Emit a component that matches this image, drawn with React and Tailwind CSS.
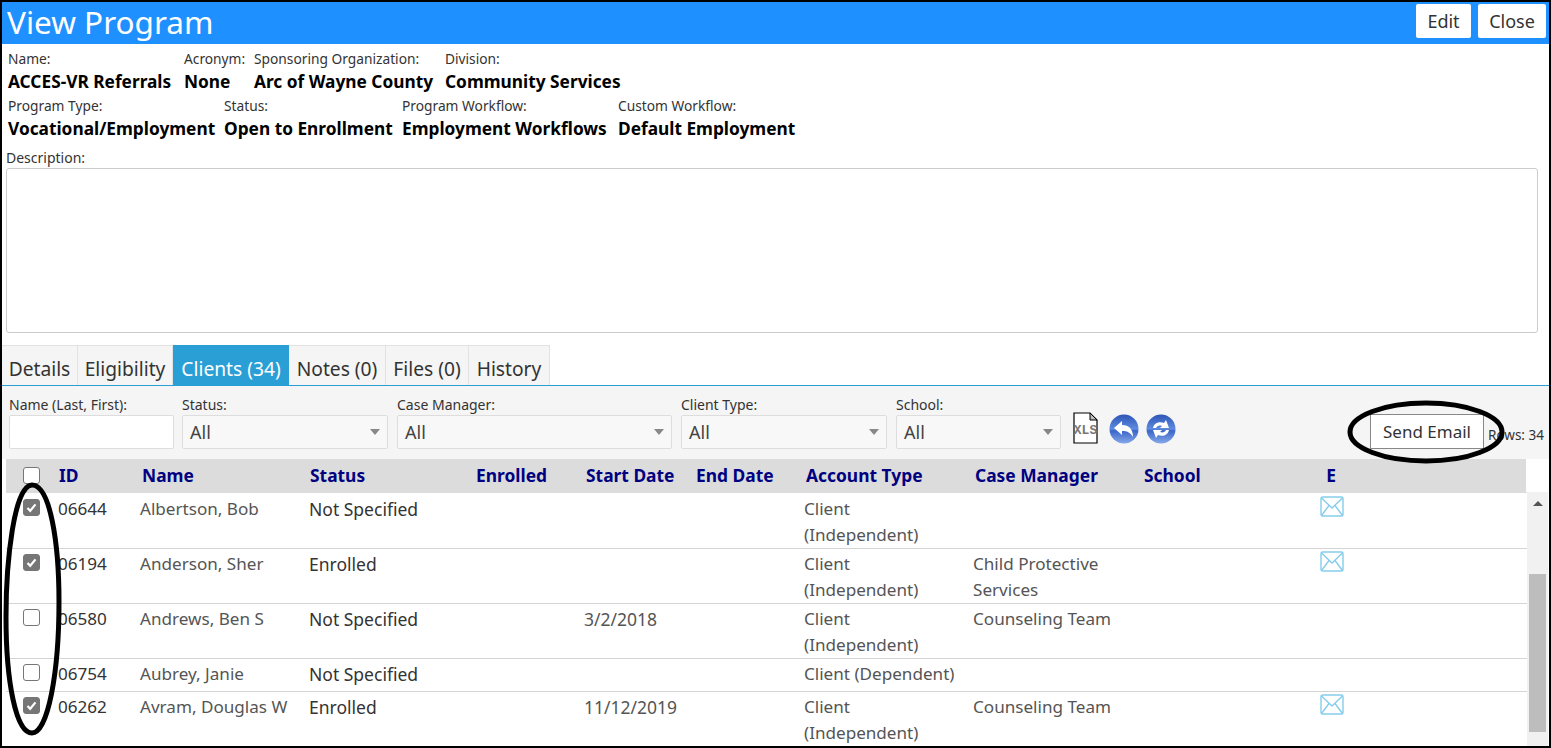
const infoRows = [
  [
    { label: 'Name:', value: 'ACCES-VR Referrals', width: 'w-[176px]' },
    { label: 'Acronym:', value: 'None', width: 'w-[70px]' },
    { label: 'Sponsoring Organization:', value: 'Arc of Wayne County', width: 'w-[191px]' },
    { label: 'Division:', value: 'Community Services', width: 'w-[200px]' },
  ],
  [
    { label: 'Program Type:', value: 'Vocational/Employment', width: 'w-[216px]' },
    { label: 'Status:', value: 'Open to Enrollment', width: 'w-[178px]' },
    { label: 'Program Workflow:', value: 'Employment Workflows', width: 'w-[216px]' },
    { label: 'Custom Workflow:', value: 'Default Employment', width: 'w-[200px]' },
  ],
]

const tabs = [
  { label: 'Details', width: 'w-[76px]' },
  { label: 'Eligibility', width: 'w-[95px]' },
  { label: 'Clients (34)', width: 'w-[116px]', active: true },
  { label: 'Notes (0)', width: 'w-[97px]' },
  { label: 'Files (0)', width: 'w-[83px]' },
  { label: 'History', width: 'w-[81px]' },
]

const filters = [
  { label: 'Status:', width: 'w-[206px]' },
  { label: 'Case Manager:', width: 'w-[275px]' },
  { label: 'Client Type:', width: 'w-[206px]' },
  { label: 'School:', width: 'w-[165px]' },
]

const clients = [
  { id: '06644', name: 'Albertson, Bob', status: 'Not Specified', start: '', type: ['Client', '(Independent)'], manager: [], email: true, checked: true, height: 'h-[56px]' },
  { id: '06194', name: 'Anderson, Sher', status: 'Enrolled', start: '', type: ['Client', '(Independent)'], manager: ['Child Protective', 'Services'], email: true, checked: true, height: 'h-[55px]' },
  { id: '06580', name: 'Andrews, Ben S', status: 'Not Specified', start: '3/2/2018', type: ['Client', '(Independent)'], manager: ['Counseling Team'], email: false, checked: false, height: 'h-[55px]' },
  { id: '06754', name: 'Aubrey, Janie', status: 'Not Specified', start: '', type: ['Client (Dependent)'], manager: [], email: false, checked: false, height: 'h-[33px]' },
  { id: '06262', name: 'Avram, Douglas W', status: 'Enrolled', start: '11/12/2019', type: ['Client', '(Independent)'], manager: ['Counseling Team'], email: true, checked: true, height: 'h-[55px]' },
]

const Checkbox = ({ checked }) => (
  <span className={`flex h-[17px] w-[17px] items-center justify-center rounded-[3px] border border-[#767676] ${checked ? 'bg-[#767676]' : 'bg-white'}`}>
    {checked && (
      <svg width="13" height="13" viewBox="0 0 13 13" fill="none">
        <path d="M2.5 7 L5.2 9.8 L10.5 3.4" stroke="white" strokeWidth="2.2" />
      </svg>
    )}
  </span>
)

const MailIcon = () => (
  <svg width="24" height="21" viewBox="0 0 24 21" fill="none" stroke="#86cdec" strokeWidth="1.4">
    <rect x="1" y="1" width="22" height="19" rx="1.5" />
    <path d="M1.5 2 L12 12 L22.5 2 M1.5 19.5 L9 9.5 M22.5 19.5 L15 9.5" />
  </svg>
)

const GlobeButton = ({ id, children }) => (
  <svg width="30" height="30" viewBox="0 0 30 30">
    <defs>
      <linearGradient id={id} x1="0" y1="0" x2="0" y2="1">
        <stop offset="0" stopColor="#2c55b5" />
        <stop offset="0.5" stopColor="#5f8be0" />
        <stop offset="0.56" stopColor="#3a66c8" />
        <stop offset="1" stopColor="#86a8ea" />
      </linearGradient>
    </defs>
    <circle cx="15" cy="15" r="14.5" fill={`url(#${id})`} />
    {children}
  </svg>
)

const SelectBox = ({ width, label }) => (
  <div className={`${width} shrink-0`}>
    <div className="h-[29px] text-[14px] leading-[38px] text-[#333]">{label}</div>
    <div className="flex h-[34px] items-center justify-between rounded-[2px] border border-[#ddd] bg-[#f8f8f8] px-[7px] text-[18px] text-[#444]">
      <span>All</span>
      <span className="h-0 w-0 border-x-[5px] border-t-[6px] border-x-transparent border-t-[#888]" />
    </div>
  </div>
)

export default function App() {
  return (
    <div className="relative flex h-[748px] w-[1551px] flex-col overflow-hidden border-2 border-black bg-white font-['Noto_Sans',sans-serif] text-[#333]">
      {/* title bar */}
      <div className="flex h-[42px] shrink-0 items-start justify-between bg-[#1e90ff] pl-[5px] pr-[3px]">
        <h1 className="text-[31.5px] leading-[40px] text-white">View Program</h1>
        <div className="mt-[2px] flex gap-[7px]">
          <button className="h-[34px] w-[55px] rounded-[2px] bg-white text-[18px] leading-[30px] text-[#333]">Edit</button>
          <button className="h-[34px] w-[68px] rounded-[2px] bg-white text-[18px] leading-[30px] text-[#333]">Close</button>
        </div>
      </div>

      {/* program info */}
      <div className="h-[300px] shrink-0 pl-[6px] pt-[4px]">
        {infoRows.map((row, i) => (
          <div key={i} className="flex h-[46.5px]">
            {row.map(field => (
              <div key={field.label} className={`${field.width} shrink-0 whitespace-nowrap`}>
                <div className="h-[22px] text-[13.75px] leading-[22px] text-[#333]">{field.label}</div>
                <div className="text-[17.3px] font-bold leading-[23.5px] text-black">{field.value}</div>
              </div>
            ))}
          </div>
        ))}
        <div className="ml-[-2px] mt-[7px] h-[20px] text-[14px] leading-[20px]">Description:</div>
        <div className="ml-[-2px] h-[165px] w-[1532px] rounded-[3px] border border-[#ccc] bg-white" />
      </div>

      {/* tabs */}
      <div className="flex h-[42px] shrink-0 items-stretch border-b border-[#2a9fd6] pt-[1px]">
        {tabs.map(tab => (
          <div
            key={tab.label}
            className={`${tab.width} flex shrink-0 items-center justify-center whitespace-nowrap pt-[8px] text-[19.2px] ${tab.active ? 'bg-[#2a9fd6] text-white' : 'border-r border-t border-[#e2e2e2] bg-[#f5f5f5] text-[#333]'}`}
          >
            {tab.label}
          </div>
        ))}
      </div>

      {/* filter bar */}
      <div className="flex h-[73px] shrink-0 bg-[#f5f5f5] pl-[7px]">
        <div className="w-[173px] shrink-0">
          <div className="h-[29px] text-[14px] leading-[38px]">Name (Last, First):</div>
          <div className="h-[34px] w-[165px] rounded-[2px] border border-[#ddd] bg-white" />
        </div>
        <div className="flex gap-[9px]">
          {filters.map(f => <SelectBox key={f.label} {...f} />)}
        </div>
        <div className="ml-[12px] flex h-[64px] items-end gap-[11px] pb-[6px]">
          <svg width="25" height="32" viewBox="0 0 25 32">
            <path d="M1 1 H17 L24 8 V31 H1 Z" fill="white" stroke="black" strokeWidth="1.2" />
            <path d="M17 1 V8 H24 Z" fill="#bbb" stroke="black" strokeWidth="1" />
            <text x="12.5" y="22" textAnchor="middle" fontSize="13" fontWeight="700" fill="#777" fontFamily="'Liberation Mono', monospace">XLS</text>
          </svg>
          <div className="flex gap-[7px]">
            <GlobeButton id="replyGrad">
              <path d="M5 14 L13 7 V11 C20 11 24 15 24 23 C21 18 18 17 13 17 V21 Z" fill="white" />
            </GlobeButton>
            <GlobeButton id="refreshGrad">
              <path d="M7 14 C8 9 13 7 18 9 L20 6 L23 14 L14 14 L16 12 C13 11 11 12 10 14 Z M23 16 C22 21 17 23 12 21 L10 24 L7 16 L16 16 L14 18 C17 19 19 18 20 16 Z" fill="white" />
            </GlobeButton>
          </div>
        </div>
        <button className="ml-[194px] mt-[28px] h-[35px] w-[114px] shrink-0 border border-[#888] bg-white text-[17px] text-[#333]">Send Email</button>
        <div className="ml-[4px] mt-[40px] whitespace-nowrap text-[13.5px] leading-[18px] text-[#333]">Rows: 34</div>
      </div>

      {/* client table */}
      <div className="flex min-h-0 flex-1 flex-col pl-[4px]">
        <div className="flex h-[33px] w-[1520px] shrink-0 items-center whitespace-nowrap bg-[#dcdcdc] text-[17.4px] font-bold text-[#000080]">
          <div className="w-[53px] pl-[17px]"><Checkbox /></div>
          <div className="w-[83px]">ID</div>
          <div className="w-[168px]">Name</div>
          <div className="w-[166px]">Status</div>
          <div className="w-[110px]">Enrolled</div>
          <div className="w-[110px]">Start Date</div>
          <div className="w-[110px]">End Date</div>
          <div className="w-[169px]">Account Type</div>
          <div className="w-[169px]">Case Manager</div>
          <div className="w-[177px]">School</div>
          <div className="w-[20px] text-center">E</div>
        </div>
        <div className="flex min-h-0 flex-1">
          <div className="w-[1521px] shrink-0 border-t border-[#ddd] text-[17.1px] leading-[26px]">
            {clients.map(c => (
              <div key={c.id} className={`flex ${c.height} whitespace-nowrap border-b border-[#d4d4d4] pt-[2px] first:pt-[3px] last:border-b-0`}>
                <div className="w-[52px] pl-[17px] pt-[3px]"><Checkbox checked={c.checked} /></div>
                <div className="w-[82px]">{c.id}</div>
                <div className="w-[169px] text-[#555]">{c.name}</div>
                <div className="w-[275px] text-[17.5px]">{c.status}</div>
                <div className="w-[220px] text-[17.5px] text-[#555]">{c.start}</div>
                <div className="w-[169px] text-[#555]">{c.type.map(t => <div key={t}>{t}</div>)}</div>
                <div className="w-[347px] text-[#555]">{c.manager.map(m => <div key={m}>{m}</div>)}</div>
                <div>{c.email && <MailIcon />}</div>
              </div>
            ))}
          </div>
          {/* scrollbar */}
          <div className="flex w-[21px] shrink-0 flex-col items-center bg-[#f1f1f1]">
            <span className="mt-[9px] h-0 w-0 border-x-[5px] border-b-[5px] border-x-transparent border-b-[#555]" />
            <div className="mt-[68px] h-[158px] w-[17px] bg-[#bdbdbd]" />
          </div>
        </div>
      </div>

      {/* hand drawn annotations */}
      <svg className="pointer-events-none absolute left-0 top-0" width="1547" height="744" fill="none" stroke="black" strokeWidth="5">
        <path d="M30 483 C12 483 4 560 4 615 C4 680 14 731 30 731 C46 731 57 670 57 600 C57 540 48 483 30 483 Z" />
        <ellipse cx="1424" cy="430" rx="76" ry="29" />
      </svg>
    </div>
  )
}
